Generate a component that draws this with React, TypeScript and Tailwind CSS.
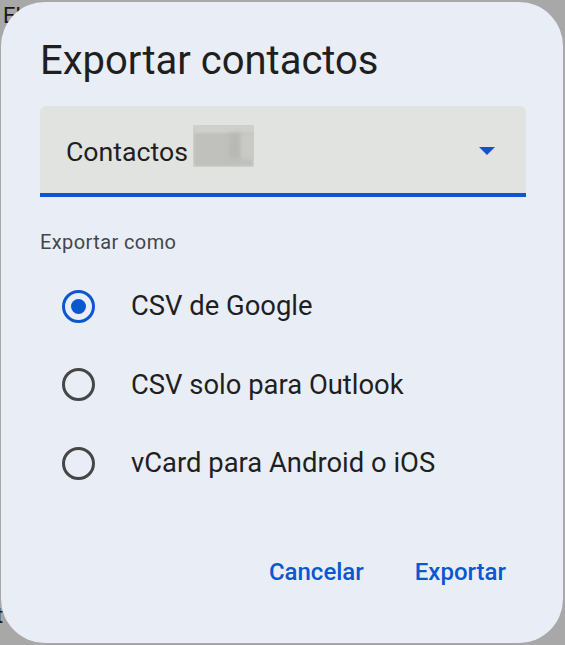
import React from "react";

function Radio({ checked }: { checked: boolean }) {
  return (
    <div
      className={
        "w-[33px] h-[33px] rounded-full border-[3px] flex items-center justify-center shrink-0 " +
        (checked ? "border-[#0b57d0]" : "border-[#444746]")
      }
    >
      {checked && <div className="w-[15px] h-[15px] rounded-full bg-[#0b57d0]" />}
    </div>
  );
}

export default function App() {
  const options = [
    { label: "CSV de Google", checked: true },
    { label: "CSV solo para Outlook", checked: false },
    { label: "vCard para Android o iOS", checked: false },
  ];
  return (
    <div
      className="relative w-[565px] h-[645px] bg-[#a8a8a8] overflow-hidden pt-[2px] pl-[1px]"
      style={{ fontFamily: "Roboto, 'Noto Sans', sans-serif" }}
    >
      <div className="absolute left-[3px] top-[3px] text-[22px] leading-[26px] text-[#1a1a1a]">El</div>
      <div className="absolute left-[-4px] top-[603px] text-[22px] leading-[26px] text-[#1a1a1a]">t</div>
      <div className="relative w-[562px] h-[641px] rounded-[44px] bg-[#e9edf6] pl-[39px] pr-[37px] pt-[35px] flex flex-col">
        <h1 className="text-[40px] leading-[48px] text-[#1f1f1f] font-normal">Exportar contactos</h1>
        <div className="mt-[21px] h-[91px] rounded-t-[6px] bg-[#e1e3e0] border-b-[4px] border-[#0b57d0] flex items-center pl-[26px] pr-[31px] pt-[5px]">
          <span className="text-[26.7px] leading-[32px] text-[#1f1f1f]">Contactos</span>
          <div className="relative ml-[5px] w-[61px] h-[42px] -mt-[12px] overflow-hidden">
            <div className="absolute inset-0 bg-[#c0c0bd] blur-[1.5px]" />
            <div className="absolute left-0 top-0 w-full h-[8px] bg-[#cfd0cc] blur-[1px]" />
            <div className="absolute left-[36px] top-[8px] w-[12px] h-[26px] bg-[#b8b8b5] blur-[2px]" />
            <div className="absolute left-[48px] top-[8px] w-[13px] h-[26px] bg-[#c9c9c6] blur-[2px]" />
          </div>
          <div className="flex-1" />
          <svg width="16" height="8" viewBox="0 0 16 8" className="-mt-[3px]">
            <path d="M0 0 L16 0 L8 8 Z" fill="#0b57d0" />
          </svg>
        </div>
        <div className="mt-[33px] text-[20px] leading-[24px] text-[#444746] font-normal tracking-[0.4px]">
          Exportar como
        </div>
        <div className="mt-[13px] flex flex-col">
          {options.map((o) => (
            <div key={o.label} className="h-[78.5px] flex items-center pl-[22px]">
              <Radio checked={o.checked} />
              <span className="ml-[36px] text-[27.4px] leading-[32px] text-[#1f1f1f]">{o.label}</span>
            </div>
          ))}
        </div>
        <div className="mt-[55px] flex justify-end gap-[51px] pr-[20px]">
          <span className="text-[24px] leading-[28px] font-medium text-[#0b57d0]">Cancelar</span>
          <span className="text-[24px] leading-[28px] font-medium text-[#0b57d0]">Exportar</span>
        </div>
      </div>
    </div>
  );
}
